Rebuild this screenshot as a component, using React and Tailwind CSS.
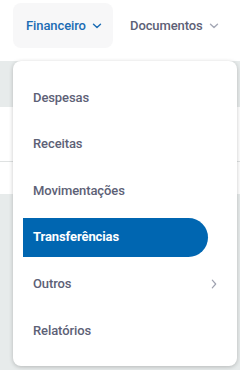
import React from "react";

const Down = ({ className }) => (
  <svg viewBox="0 0 10 6" className={className} fill="none" stroke="currentColor" strokeWidth="1.4" strokeLinecap="round" strokeLinejoin="round">
    <path d="M1.5 1.2 L5 4.6 L8.5 1.2" />
  </svg>
);

const Right = ({ className }) => (
  <svg viewBox="0 0 6 10" className={className} fill="none" stroke="currentColor" strokeWidth="1.2" strokeLinecap="round" strokeLinejoin="round">
    <path d="M1.3 1.2 L4.7 5 L1.3 8.8" />
  </svg>
);

const items = ["Despesas", "Receitas", "Movimentações", "Transferências", "Outros", "Relatórios"];

export default function App() {
  return (
    <div className="relative w-[240px] h-[370px] bg-white overflow-hidden" style={{ fontFamily: "Roboto, 'Liberation Sans', sans-serif" }}>
      <div className="h-[61px] flex items-start pt-[3px] pl-[13px]">
        <div className="w-[100px] h-[45px] rounded-lg bg-[#f7f7f8] flex items-center pl-[13px] gap-[6px]">
          <span className="text-[13px] font-medium text-[#1b6cb4] tracking-[-0.1px]">Financeiro</span>
          <Down className="w-[10px] h-[6px] text-[#1b6cb4]" />
        </div>
        <div className="h-[45px] flex items-center pl-[17px] gap-[6px]">
          <span className="text-[13px] font-medium text-[#5d6176] tracking-[-0.1px]">Documentos</span>
          <Down className="w-[10px] h-[6px] text-[#a6a9b6]" />
        </div>
      </div>
      <div className="flex flex-col">
        <div className="h-[46px] bg-[#e7ebeb]" />
        <div className="h-[55px] bg-white border-b border-[#dfe2e2]" />
        <div className="h-[32px] bg-white" />
        <div className="h-[176px] bg-[#e7ebeb]" />
      </div>
      <div className="absolute left-[13px] top-[61px] w-[224px] h-[305px] bg-white rounded-lg shadow-[0_1px_4px_rgba(0,0,0,0.22)] pt-[13px]">
        {items.map((t) => {
          const active = t === "Transferências";
          return (
            <div key={t} className="h-[46.6px] flex items-center">
              {active ? (
                <div className="ml-[10px] w-[185px] h-[39px] bg-[#0066b1] rounded-r-full flex items-center pl-[10px]">
                  <span className="text-[13px] font-bold text-white tracking-[-0.1px]">{t}</span>
                </div>
              ) : (
                <div className="w-full flex items-center justify-between pl-[20px] pr-[20px]">
                  <span className="text-[13px] font-medium text-[#5d6176] tracking-[-0.1px]">{t}</span>
                  {t === "Outros" && <Right className="w-[6px] h-[10px] text-[#9fa2b0]" />}
                </div>
              )}
            </div>
          );
        })}
      </div>
    </div>
  );
}
